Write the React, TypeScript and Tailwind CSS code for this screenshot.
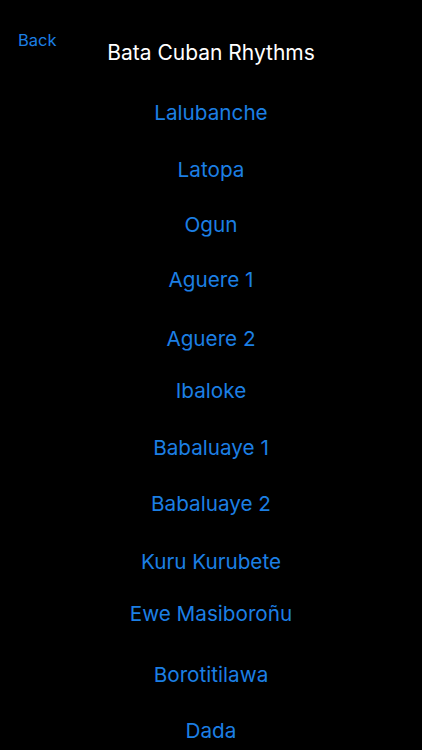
import React from "react";

const items: { name: string; mt: string }[] = [
  { name: "Lalubanche", mt: "mt-[36px]" },
  { name: "Latopa", mt: "mt-[33px]" },
  { name: "Ogun", mt: "mt-[31px]" },
  { name: "Aguere 1", mt: "mt-[31px]" },
  { name: "Aguere 2", mt: "mt-[35px]" },
  { name: "Ibaloke", mt: "mt-[28px]" },
  { name: "Babaluaye 1", mt: "mt-[33px]" },
  { name: "Babaluaye 2", mt: "mt-[32px]" },
  { name: "Kuru Kurubete", mt: "mt-[34px]" },
  { name: "Ewe Masiboroñu", mt: "mt-[28px]" },
  { name: "Borotitilawa", mt: "mt-[37px]" },
  { name: "Dada", mt: "mt-[32px]" },
];

export default function App() {
  return (
    <div
      className="w-[422px] h-[750px] bg-black overflow-hidden"
      style={{ fontFamily: "Inter, 'Noto Sans', sans-serif" }}
    >
      <div className="grid grid-cols-[1fr_auto_1fr]">
        <div className="pt-[28px] pl-[18px]">
          <span className="text-[16.5px] leading-[20px] text-[#1c7fe4]">Back</span>
        </div>
        <div className="pt-[41px] text-[21px] leading-[24px] text-white">
          Bata Cuban Rhythms
        </div>
        <div />
      </div>
      <div className="flex flex-col items-center">
        {items.map((it) => (
          <div
            key={it.name}
            className={`${it.mt} h-[24px] text-[20.7px] leading-[24px] text-[#1c7fe4]`}
          >
            {it.name}
          </div>
        ))}
      </div>
    </div>
  );
}
